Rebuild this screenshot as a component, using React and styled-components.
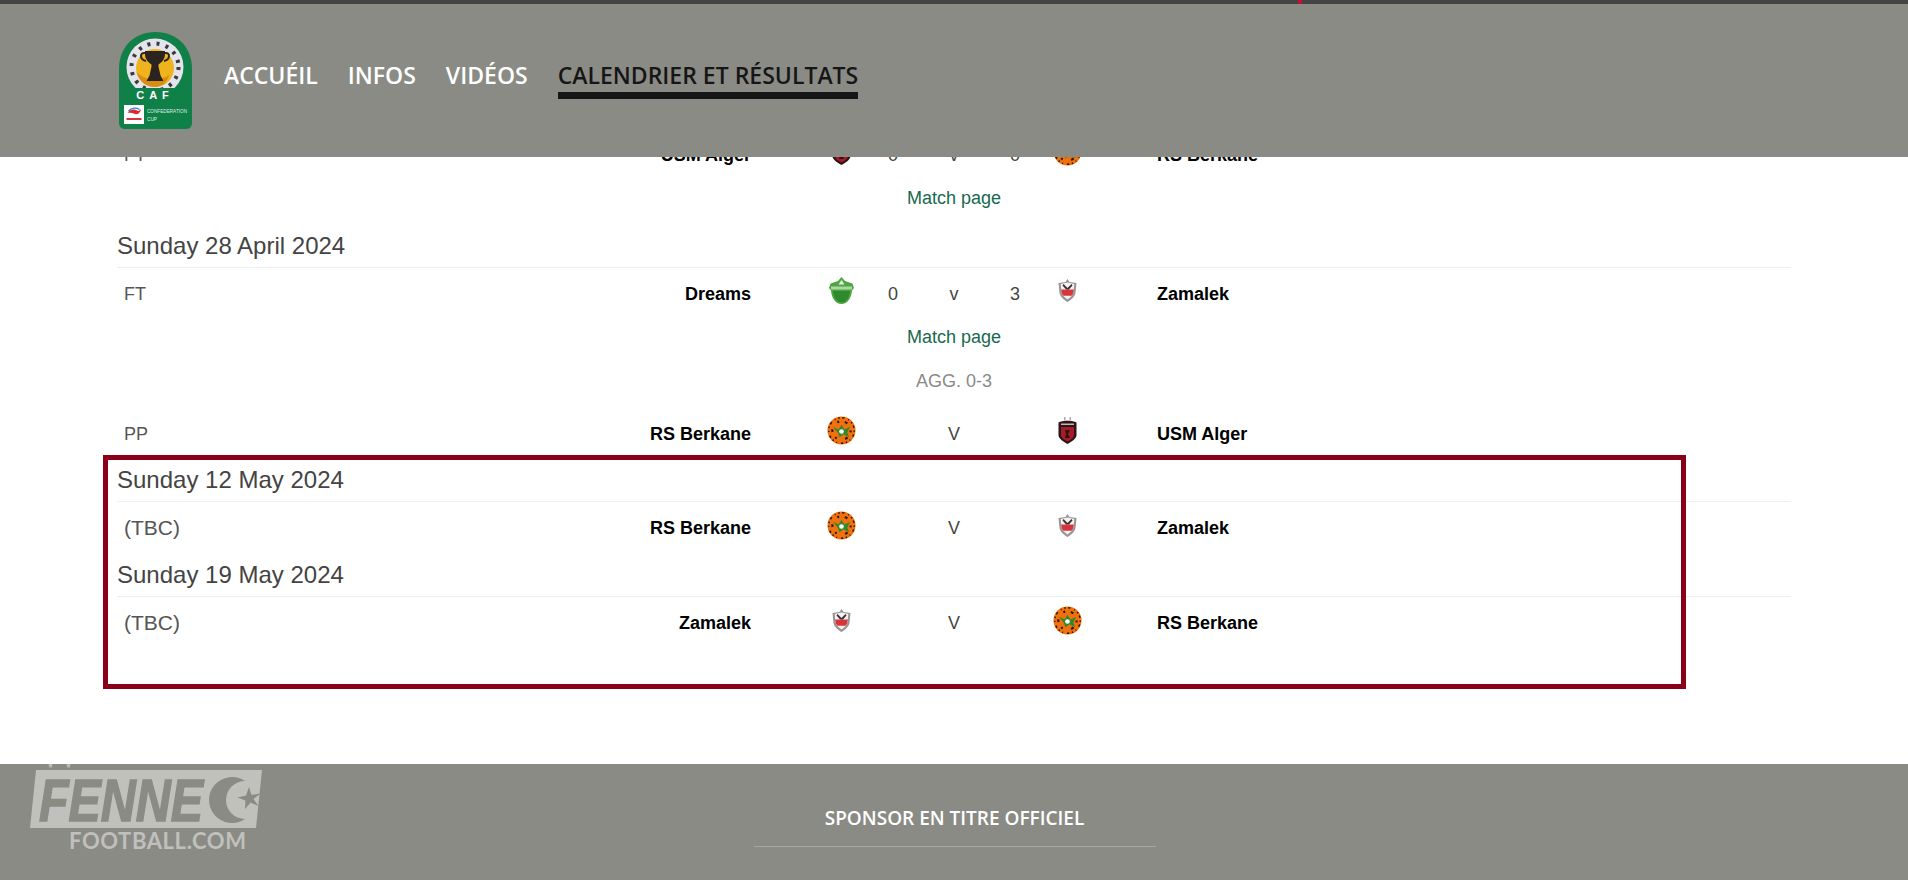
import styled, { createGlobalStyle } from "styled-components";

const GlobalStyle = createGlobalStyle`
  html, body {
    margin: 0;
    padding: 0;
    background: #fff;
    overflow: hidden;
  }
`;

const headerFont = `"Open Sans", "Noto Sans", sans-serif`;
const bodyFont = `"Liberation Sans", Arial, sans-serif`;

function Berkane() {
  return (
    <svg width="29" height="29" viewBox="0 0 30 30">
      <circle cx="15" cy="15" r="14.5" fill="#f2710f" />
      <circle cx="15" cy="15" r="13.2" fill="none" stroke="#2a1a0c" strokeWidth="1.6" strokeDasharray="1.5 2.6 2.5 4 1 3" />
      <circle cx="15" cy="15" r="9.5" fill="none" stroke="#2a1a0c" strokeWidth="2.2" strokeDasharray="2 6 3 9" />
      <path d="M6 11l6 3 3-5 3 5 6-3-3 6 2 5-6-3-4 3-2-5z" fill="#2f8a2c" />
      <circle cx="15" cy="16" r="2.4" fill="#fff" />
    </svg>
  );
}

function Zamalek() {
  return (
    <svg width="19" height="23" viewBox="0 0 19 23">
      <path d="M9.5 0l2 3 7 1-1 10c-.8 4-4.500 7-8 9-3.500-2-7.200-5-8-9L.5 4l7-1z" fill="#9a9494" />
      <path d="M9.500 3.500l6.800 1.500-.8 8.500c-.8 3-3.500 5.200-6 7-2.500-1.800-5.200-4-6-7L2.700 5z" fill="#f6f2f2" />
      <path d="M3.200 10.500h12.600l-.4 3c-.3 1.200-1 2.300-1.900 3.300H5.500c-.9-1-1.600-2.100-1.900-3.300z" fill="#d8343c" />
      <path d="M5.500 5l4 4 4-4 1 1.500-3.500 4H8l-3.500-4z" fill="#3a3232" />
    </svg>
  );
}

function Dreams() {
  return (
    <svg width="25" height="27" viewBox="0 0 25 27">
      <path d="M12.500 0l3.500 4 7.500 2.500L25 11l-2 2.500C22.500 21 18.500 27 12.500 27S2.500 21 2 13.500L0 11l1.500-4.500L9 4z" fill="#4fa544" />
      <path d="M2 9.500h21v3H2z" fill="#a9d8a0" />
      <path d="M12.500 3l3 4.500h-6z" fill="#e3f3df" />
      <path d="M4 14c.5 6.500 4 11.500 8.500 11.500S20.500 20.500 21 14z" fill="#2f8a2c" />
    </svg>
  );
}

function Usm() {
  return (
    <svg width="19" height="27" viewBox="0 0 19 27">
      <path d="M6 0h1.500v3H6zM11.500 0H13v3h-1.500z" fill="#b9a9a0" />
      <path d="M.5 5.500C4 3 15 3 18.500 5.500V18c0 4-5.500 7-9 9-3.500-2-9-5-9-9z" fill="#2a1518" />
      <path d="M3 10h13v8c0 3-3.500 5-6.500 6.500C6.500 23 3 21 3 18z" fill="#a81a26" />
      <path d="M7 13h5l-2 4 2 4H7l1-4z" fill="#2a1518" />
      <path d="M3 6.500h13v1.500H3z" fill="#c8b8b0" />
    </svg>
  );
}

function CafLogo() {
  return (
    <svg width="73" height="97" viewBox="0 0 73 97">
      <path d="M0 37C0 15 15 0 36.500 0S73 15 73 37v54c0 3-2 6-6 6H6c-4 0-6-3-6-6z" fill="#0f8048" />
      <clipPath id="caf-ring">
        <rect x="0" y="0" width="73" height="56" />
      </clipPath>
      <g clipPath="url(#caf-ring)">
        <circle cx="36" cy="35" r="28.500" fill="#e4e4ec" />
        <circle cx="36" cy="35" r="23.500" fill="none" stroke="#3a3a3a" strokeWidth="4" strokeDasharray="3 6.300" />
        <circle cx="36" cy="36" r="19" fill="#efb31e" />
        <path d="M36 55c-9 0-16-6-18.500-15 8 8 20 11 33 3-2.500 7-7 12-14.500 12z" fill="#d88e12" />
        <path d="M26 19h20v3c0 5-3 8-6.500 10.500v2l2 9 3 5.500H27.500l3-5.500 2-9v-2C29 30 26 27 26 22z" fill="#2a2320" />
        <path d="M26 21c-5-1-6 6 1 8M46 21c5-1 6 6-1 8" fill="none" stroke="#2a2320" strokeWidth="2" />
      </g>
      <text x="36" y="67" textAnchor="middle" fill="#fff" fontFamily='"Liberation Sans", sans-serif' fontWeight="700" fontSize="11" letterSpacing="5">CAF</text>
      <rect x="5" y="73" width="20" height="19" fill="#fff" />
      <path d="M8.500 81c3-4 7-4 9.500-2.500 2 1.500 3-1 4-1.500-.5 4-3.500 6-6 5-2.500-1-5-1.500-7.500-1z" fill="#e0282e" />
      <path d="M9.500 79c3-3.500 8-3.500 11-1.500" fill="none" stroke="#2f7fd6" strokeWidth="1.300" />
      <rect x="7.500" y="86" width="15" height="2" fill="#d8343c" />
      <text x="28" y="81" fill="#dfeee5" fontFamily='"Liberation Sans", sans-serif' fontSize="5" textLength="40" lengthAdjust="spacingAndGlyphs">CONFEDERATION</text>
      <text x="28" y="89" fill="#dfeee5" fontFamily='"Liberation Sans", sans-serif' fontSize="5" textLength="10" lengthAdjust="spacingAndGlyphs">CUP</text>
    </svg>
  );
}

function FennecLogo() {
  return (
    <svg width="240" height="90" viewBox="0 0 240 90">
      <path d="M26 0l-2 1 1.500 1-.5 2 1.500-1 1.500 1-.5-2 1.500-1-2-1zM44 0l-2 1 1.500 1-.5 2 1.500-1 1.500 1-.5-2 1.500-1-2-1z" fill="#c0c0bc" />
      <path d="M12 6h226l-6 58H6z" fill="#c0c0bc" />
      <text x="15" y="57" fill="#8b8b85" stroke="#8b8b85" strokeWidth="1.500" fontFamily='"Liberation Sans", sans-serif' fontStyle="italic" fontWeight="700" fontSize="60" textLength="164" lengthAdjust="spacingAndGlyphs">FENNE</text>
      <path d="M221 17A23 23 0 1 0 221 55A19 19 0 1 1 221 17z" fill="#8b8b85" />
      <path d="M225 23l2.500 8 9-1.500-7 5.500 5 7-8-3.500-5.500 6.500 .5-8.500-8-3 8.500-2z" fill="#8b8b85" />
      <text x="45" y="85" fill="#c0c0bc" fontFamily="Lato, sans-serif" fontWeight="700" fontSize="22" textLength="177">FOOTBALL.COM</text>
    </svg>
  );
}

const crests = {
  berkane: <Berkane />,
  zamalek: <Zamalek />,
  dreams: <Dreams />,
  usm: <Usm />,
};

function Match({ status, home, homeCrest, away, awayCrest, score, sep = "V", tbc, tall }) {
  return (
    <Row $tall={tall}>
      <Status $tbc={tbc}>{status}</Status>
      <Home>{home}</Home>
      <Crest>{crests[homeCrest]}</Crest>
      <Score>{score && score[0]}</Score>
      <Score>{sep}</Score>
      <Score>{score && score[1]}</Score>
      <Crest>{crests[awayCrest]}</Crest>
      <Away>{away}</Away>
    </Row>
  );
}

export default function App() {
  return (
    <Page>
      <GlobalStyle />
      <TopStrip />
      <Header>
        <LogoLink><CafLogo /></LogoLink>
        <Nav>
          <NavItem>ACCUÉIL</NavItem>
          <NavItem>INFOS</NavItem>
          <NavItem>VIDÉOS</NavItem>
          <NavItem $active>CALENDRIER ET RÉSULTATS</NavItem>
        </Nav>
      </Header>

      <Fixtures>
        <Match status="FT" home="USM Alger" homeCrest="usm" away="RS Berkane" awayCrest="berkane" score={["0", "0"]} sep="v" />
        <MatchLink>Match page</MatchLink>

        <DateHead $gap={10}>Sunday 28 April 2024</DateHead>
        <Match status="FT" home="Dreams" homeCrest="dreams" away="Zamalek" awayCrest="zamalek" score={["0", "3"]} sep="v" />
        <MatchLink>Match page</MatchLink>
        <Aggregate>AGG. 0-3</Aggregate>
        <Match status="PP" home="RS Berkane" homeCrest="berkane" away="USM Alger" awayCrest="usm" />

        <DateHead $gap={3}>Sunday 12 May 2024</DateHead>
        <Match status="(TBC)" tbc tall home="RS Berkane" homeCrest="berkane" away="Zamalek" awayCrest="zamalek" />
        <DateHead $gap={1}>Sunday 19 May 2024</DateHead>
        <Match status="(TBC)" tbc tall home="Zamalek" homeCrest="zamalek" away="RS Berkane" awayCrest="berkane" />
      </Fixtures>

      <Highlight />

      <Footer>
        <Watermark><FennecLogo /></Watermark>
        <SponsorTitle>SPONSOR EN TITRE OFFICIEL</SponsorTitle>
        <SponsorLine />
      </Footer>
    </Page>
  );
}

const Page = styled.div`
  position: relative;
  height: 880px;
  overflow: hidden;
  display: flex;
  flex-direction: column;
  font-family: ${bodyFont};
`;

const TopStrip = styled.div`
  position: fixed;
  top: 0;
  left: 0;
  right: 0;
  height: 4px;
  background: #444;
  z-index: 3;

  &::after {
    content: "";
    position: absolute;
    left: 1298px;
    top: 0;
    width: 4px;
    height: 4px;
    background: #c8102e;
  }
`;

const Header = styled.header`
  position: fixed;
  top: 0;
  left: 0;
  right: 0;
  height: 157px;
  box-sizing: border-box;
  padding: 32px 0 0 119px;
  display: flex;
  align-items: flex-start;
  background: #8b8b85;
  z-index: 2;
`;

const LogoLink = styled.a`
  display: block;
  width: 73px;
  height: 97px;
  margin-right: 32px;
`;

const Nav = styled.nav`
  display: flex;
  gap: 30px;
  padding-top: 27px;
`;

const NavItem = styled.a`
  font-family: ${headerFont};
  font-size: 23px;
  font-weight: 600;
  line-height: 33px;
  height: 40px;
  box-sizing: border-box;
  white-space: nowrap;
  color: ${(p) => (p.$active ? "#161616" : "#fff")};
  border-bottom: ${(p) => (p.$active ? "7px solid #161616" : "0")};
`;

const Fixtures = styled.main`
  flex: 1;
  padding: 129px 117px 0;
`;

const Row = styled.div`
  display: grid;
  grid-template-columns: 300px 393px 62px 42px 80px 42px 62px 1fr;
  align-items: center;
  box-sizing: border-box;
  padding-top: ${(p) => (p.$tall ? "0" : "2px")};
  height: ${(p) => (p.$tall ? "53px" : "50px")};
  font-size: 18px;
`;

const Status = styled.div`
  padding-left: 7px;
  color: #555;
  font-size: ${(p) => (p.$tbc ? "21px" : "18px")};
  margin-top: ${(p) => (p.$tbc ? "-2px" : "0")};
`;

const Home = styled.div`
  padding-right: 59px;
  text-align: right;
  font-weight: 700;
  color: #000;
`;

const Away = styled.div`
  padding-left: 59px;
  font-weight: 700;
  color: #000;
`;

const Crest = styled.div`
  display: flex;
  justify-content: center;
  margin-top: -7px;
`;

const Score = styled.div`
  text-align: center;
  color: #444;
`;

const MatchLink = styled.a`
  display: block;
  height: 38px;
  line-height: 38px;
  text-align: center;
  font-size: 18px;
  color: #17694f;
`;

const Aggregate = styled.div`
  height: 50px;
  line-height: 50px;
  margin-bottom: 2px;
  text-align: center;
  font-size: 18px;
  color: #8a8a8a;
`;

const DateHead = styled.h3`
  margin: ${(p) => p.$gap}px 0 0;
  padding-bottom: 2px;
  font-size: 24px;
  font-weight: 400;
  line-height: 38px;
  color: #444;
  border-bottom: 1px solid #eee;
`;

const Highlight = styled.div`
  position: absolute;
  left: 103px;
  top: 455px;
  width: 1583px;
  height: 234px;
  box-sizing: border-box;
  border: 5px solid #8a0018;
  pointer-events: none;
`;

const Footer = styled.footer`
  position: relative;
  height: 116px;
  flex-shrink: 0;
  background: #8b8b85;
  display: flex;
  flex-direction: column;
  align-items: center;
  overflow: hidden;
  padding-left: 1px;
`;

const Watermark = styled.div`
  position: absolute;
  left: 24px;
  top: 0;
`;

const SponsorTitle = styled.div`
  margin-top: 40px;
  font-family: ${headerFont};
  font-size: 19px;
  font-weight: 600;
  line-height: 28px;
  color: #fff;
`;

const SponsorLine = styled.div`
  width: 402px;
  height: 1px;
  margin-top: 14px;
  background: #a8a8a3;
`;
